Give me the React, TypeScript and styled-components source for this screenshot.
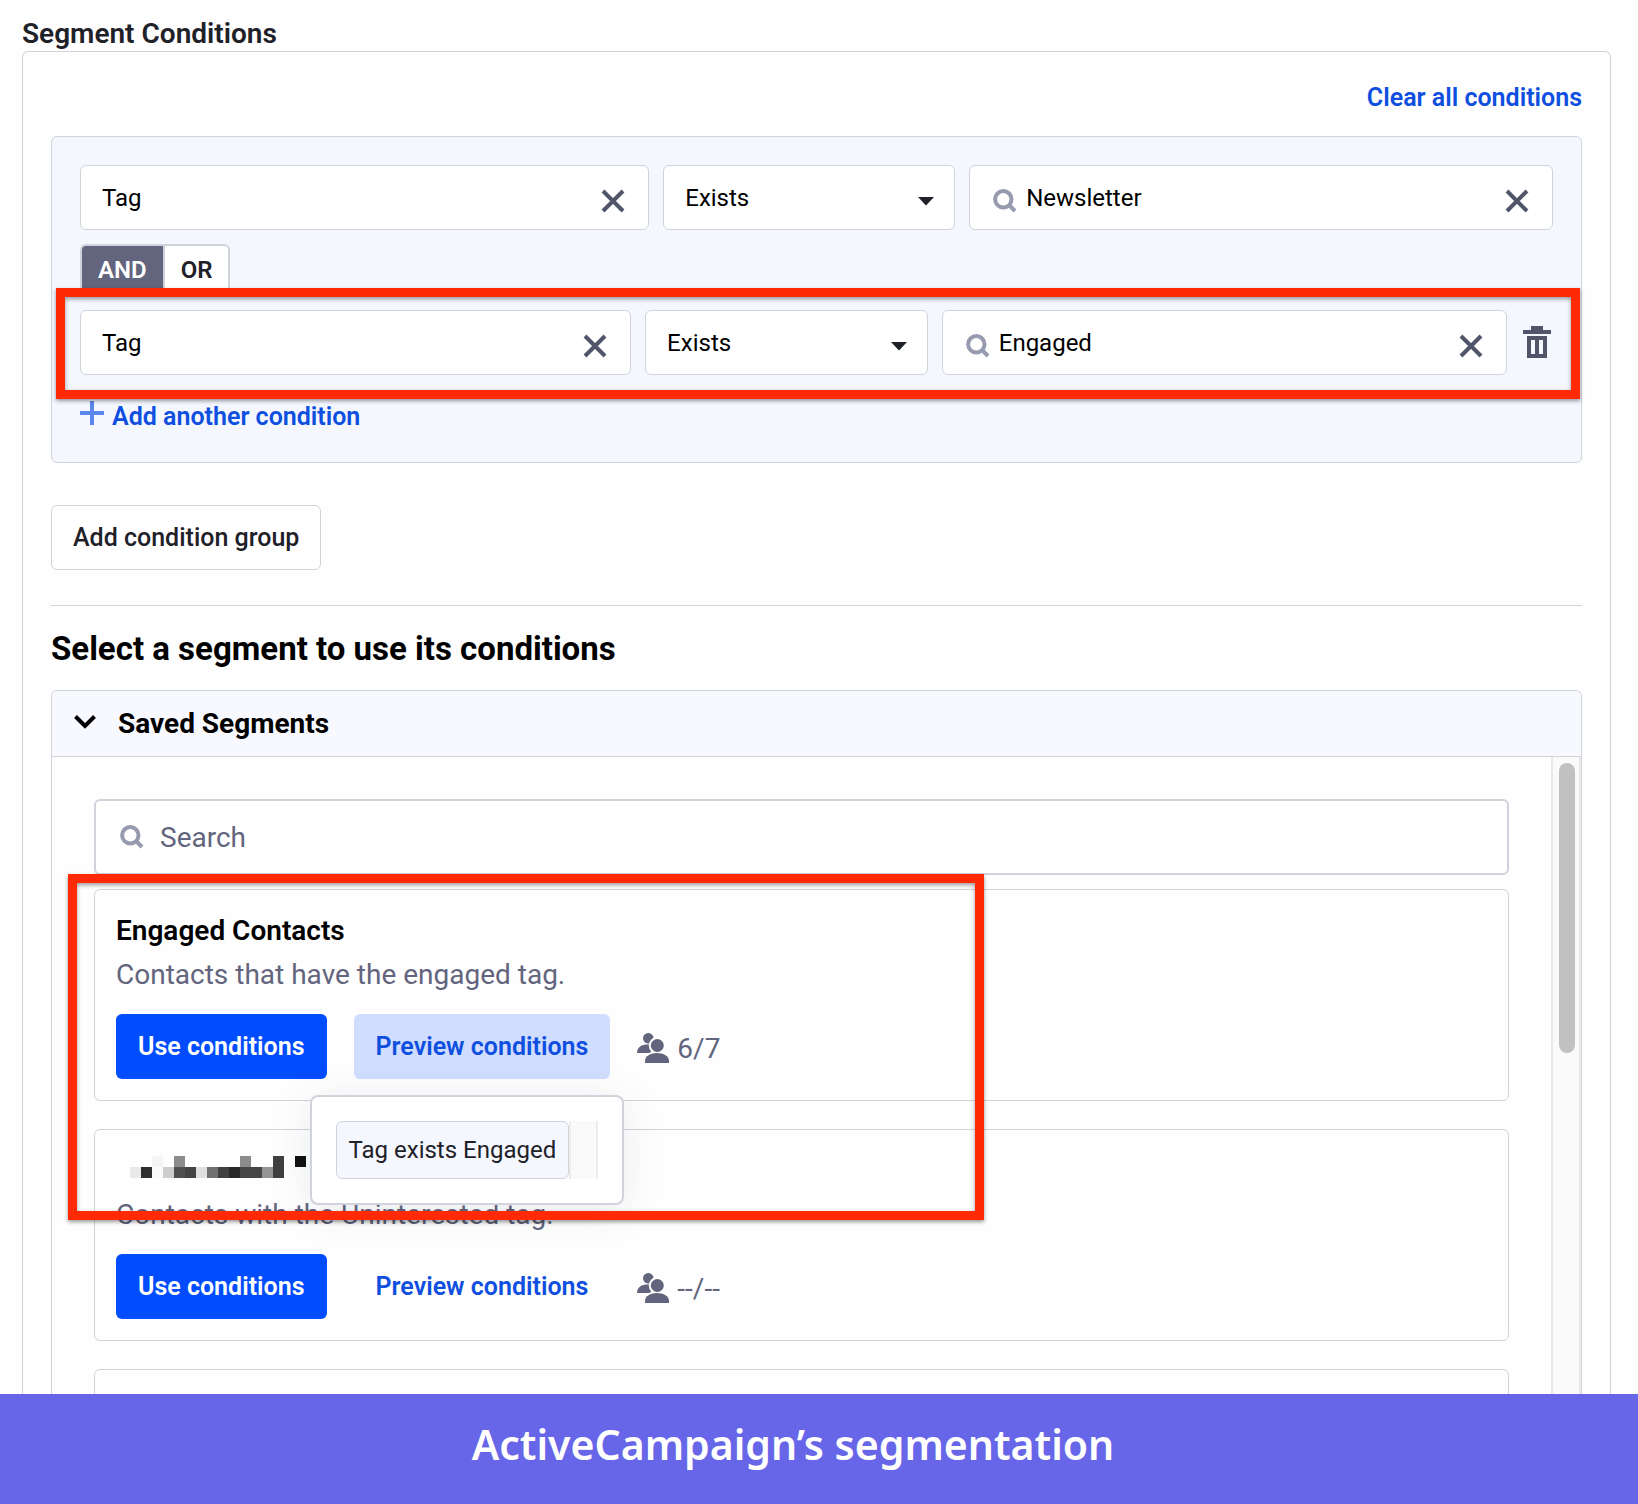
import React, { useState } from 'react';
import styled, { createGlobalStyle, css } from 'styled-components';

const color = {
  ink: '#1f2129',
  muted: '#62657d',
  icon: '#50556a',
  iconSoft: '#979bb0',
  line: '#d0d3dc',
  blue: '#004cff',
  link: '#0f4fe0',
  groupBg: '#f4f7fe',
  headBg: '#f8f9ff',
  red: '#ff2a04',
  banner: '#6765e8',
};

const GlobalStyle = createGlobalStyle`
  *, *::before, *::after { box-sizing: border-box; }
  body { margin: 0; background: #fefefe; }
  body, button, input, select { font-family: Roboto, "Liberation Sans", sans-serif; }
  h1, h2, h3, p { margin: 0; }
`;

/* ---------- page frame ---------- */

const Page = styled.div`
  display: flex;
  flex-direction: column;
  height: 100vh;
  color: ${color.ink};
`;

const Content = styled.main`
  display: flex;
  flex-direction: column;
  flex: 1;
  min-height: 0;
  overflow: hidden;
  padding: 16px 27px 0 22px;
`;

const PageTitle = styled.h1`
  font-size: 28px;
  font-weight: 600;
  line-height: 35px;
`;

const Panel = styled.section`
  display: flex;
  flex-direction: column;
  flex: 1;
  min-height: 0;
  padding: 28px 28px 0;
  border: 1px solid ${color.line};
  border-bottom: 0;
  border-radius: 6px 6px 0 0;
`;

const Banner = styled.footer`
  display: flex;
  align-items: center;
  justify-content: center;
  flex: none;
  height: 110px;
  padding: 0 52px 10px 0;
  background: ${color.banner};
  color: #fff;
  font-family: "Noto Sans", Roboto, sans-serif;
  font-size: 41px;
  font-weight: 600;
`;

/* ---------- buttons ---------- */

const buttonReset = css`
  display: inline-flex;
  align-items: center;
  margin: 0;
  padding: 0;
  border: 0;
  background: none;
  color: inherit;
  cursor: pointer;
`;

const LinkButton = styled.button`
  ${buttonReset}
  gap: 8px;
  color: ${color.link};
  font-size: 25px;
  font-weight: 600;
  line-height: 34px;
`;

const IconButton = styled.button`
  ${buttonReset}
  justify-content: center;
  flex: none;
`;

const Button = styled.button<{ $variant: 'outline' | 'primary' | 'soft' | 'text' }>`
  ${buttonReset}
  height: 65px;
  padding: 0 21px;
  border: 1px solid transparent;
  border-radius: 6px;
  font-size: 25px;
  font-weight: 600;
  white-space: nowrap;
  ${p => p.$variant === 'outline' && css`border-color: ${color.line}; background: #fff; font-weight: 500;`}
  ${p => p.$variant === 'primary' && css`background: ${color.blue}; color: #fff;`}
  ${p => p.$variant === 'soft' && css`background: #d0ddff; color: ${color.link};`}
  ${p => p.$variant === 'text' && css`color: ${color.link};`}
`;

/* ---------- condition builder ---------- */

const PanelHead = styled.div`
  display: flex;
  justify-content: flex-end;
  padding-top: 1px;
  margin-bottom: 21px;
`;

const ConditionGroup = styled.div`
  display: flex;
  flex-direction: column;
  align-items: stretch;
  flex: none;
  gap: 14px;
  padding: 28px;
  border: 1px solid ${color.line};
  border-radius: 6px;
  background: ${color.groupBg};
`;

const ConditionRow = styled.div`
  position: relative;
  display: flex;
  align-items: center;
  gap: 14px;
`;

const Fields = styled.div`
  display: grid;
  grid-template-columns: 195fr 100fr 200fr;
  flex: 1;
  gap: 14px;
`;

const FieldBox = styled.div`
  position: relative;
  display: flex;
  align-items: center;
  min-width: 0;
  height: 65px;
  padding: 0 23px 0 21px;
  border: 1px solid ${color.line};
  border-radius: 6px;
  background: #fff;
`;

const FieldInput = styled.input`
  flex: 1;
  min-width: 0;
  height: 100%;
  padding: 0;
  border: 0;
  outline: 0;
  background: none;
  color: #000;
  font-size: 24px;
`;

const FieldSelect = styled.select`
  flex: 1;
  height: 63px;
  margin: 0 -23px 0 -21px;
  padding: 0 48px 0 21px;
  border: 0;
  outline: 0;
  appearance: none;
  background: none;
  color: #000;
  font-size: 24px;
`;

const CaretSlot = styled.span`
  position: absolute;
  right: 20px;
  top: 0;
  display: flex;
  align-items: center;
  height: 100%;
  pointer-events: none;
`;

const FieldIcon = styled.span`
  display: flex;
  flex: none;
  margin: 0 9px 0 2px;
`;

const TrashSlot = styled(IconButton)`
  width: 32px;
  height: 65px;
`;

const Toggle = styled.div`
  display: flex;
  align-self: flex-start;
  height: 52px;
  border: 2px solid ${color.line};
  border-radius: 6px;
  overflow: hidden;
`;

const ToggleOption = styled.button<{ $on: boolean }>`
  ${buttonReset}
  padding: 0 16px;
  background: ${p => (p.$on ? color.muted : '#fff')};
  color: ${p => (p.$on ? '#fff' : color.ink)};
  font-size: 24px;
  font-weight: 600;

  & + & { border-left: 2px solid ${color.line}; }
`;

const AddRow = styled.div`
  display: flex;
  padding-top: 11px;
`;

const GroupActions = styled.div`
  display: flex;
  padding: 42px 0 35px;
`;

/* ---------- saved segments ---------- */

const SectionTitle = styled.h2`
  padding: 22px 0 20px;
  border-top: 1px solid ${color.line};
  color: #000;
  font-size: 33px;
  font-weight: 700;
  line-height: 42px;
`;

const Accordion = styled.div`
  display: flex;
  flex-direction: column;
  flex: 1;
  min-height: 0;
  border: 1px solid ${color.line};
  border-bottom: 0;
  border-radius: 6px 6px 0 0;
`;

const AccordionHead = styled.button`
  ${buttonReset}
  flex: none;
  gap: 22px;
  height: 66px;
  padding: 0 22px;
  border-bottom: 1px solid ${color.line};
  border-radius: 5px 5px 0 0;
  background: ${color.headBg};
  color: #000;
  font-size: 28px;
  font-weight: 700;
`;

const AccordionBody = styled.div`
  display: flex;
  flex: 1;
  min-height: 0;
`;

const SegmentList = styled.div`
  flex: 1;
  min-width: 0;
  overflow: hidden;
  padding: 42px 42px 0;
`;

const Scrollbar = styled.div`
  flex: none;
  width: 30px;
  padding: 6px;
  border: solid #e8e8e9;
  border-width: 0 2px;
  background: #fafafa;
`;

const Thumb = styled.div`
  width: 16px;
  height: 290px;
  border-radius: 8px;
  background: #c1c1c1;
`;

const SearchBox = styled.label`
  display: flex;
  align-items: center;
  gap: 16px;
  height: 76px;
  margin-bottom: 14px;
  padding: 0 24px;
  border: 2px solid ${color.line};
  border-radius: 6px;
  background: #fff;
`;

const SearchInput = styled(FieldInput)`
  font-size: 28px;

  &::placeholder { color: ${color.muted}; opacity: 1; }
`;

const SegmentCard = styled.article`
  position: relative;
  height: 212px;
  margin-bottom: 28px;
  padding: 21px;
  border: 1px solid ${color.line};
  border-radius: 6px;
`;

const SegmentName = styled.h3`
  height: 40px;
  margin-bottom: 4px;
  color: #000;
  font-size: 28px;
  font-weight: 600;
  line-height: 40px;
`;

const SegmentText = styled.p`
  margin-bottom: 19px;
  color: ${color.muted};
  font-size: 28px;
  line-height: 40px;
`;

const SegmentActions = styled.div`
  display: flex;
  align-items: center;
  gap: 27px;
`;

const PopoverAnchor = styled.div`
  position: relative;
  display: flex;
`;

const Popover = styled.div`
  position: absolute;
  z-index: 2;
  top: calc(100% + 16px);
  left: -44px;
  display: flex;
  padding: 24px;
  border: 2px solid ${color.line};
  border-radius: 8px;
  background: #fff;
  box-shadow: 0 6px 40px rgba(60, 66, 100, 0.1);
`;

const Chip = styled.span`
  height: 58px;
  padding: 0 12px;
  border: 1px solid ${color.line};
  border-radius: 6px;
  background: ${color.groupBg};
  font-size: 24px;
  line-height: 57px;
  white-space: nowrap;
`;

const ChipGutter = styled.span`
  width: 29px;
  border: solid #ededee;
  border-width: 0 2px;
  background: #fafafa;
`;

const Count = styled.span`
  display: flex;
  align-items: center;
  gap: 8px;
  padding-top: 3px;
  color: ${color.muted};
  font-size: 28px;
`;

/* ---------- annotations drawn over the page ---------- */

const callout = css`
  position: absolute;
  z-index: 3;
  border: 9px solid ${color.red};
  box-shadow: 0 2px 4px rgba(0, 0, 0, 0.4), inset 0 2px 4px rgba(0, 0, 0, 0.4);
  pointer-events: none;
`;

const RowCallout = styled.div`
  ${callout}
  inset: -22px -27px -24px -24px;
`;

const CardCallout = styled.div`
  ${callout}
  top: -16px;
  left: -27px;
  width: 916px;
  height: 346px;
`;

/* ---------- icons ---------- */

const CloseIcon = () => (
  <svg width="24" height="32" viewBox="0 0 24 32" fill="none" stroke={color.icon} strokeWidth="4" aria-hidden="true">
    <path d="M2 9 22 29M22 9 2 29" />
  </svg>
);

const SearchIcon = ({ drop = 0 }: { drop?: number }) => (
  <svg width="24" height="32" viewBox={`0 ${-4 - drop} 24 32`} fill="none" stroke={color.iconSoft} strokeWidth="4" aria-hidden="true">
    <circle cx="10.3" cy="10.3" r="8.2" />
    <path d="M15.5 15.5 22 22" />
  </svg>
);

const CaretIcon = () => (
  <svg width="16" height="24" viewBox="0 0 16 24" fill={color.ink} aria-hidden="true">
    <path d="M0 11h16l-8 8.5z" />
  </svg>
);

const TrashIcon = () => (
  <svg width="28" height="34" viewBox="0 0 28 34" fill={color.icon} fillRule="evenodd" aria-hidden="true">
    <path d="M8 0h12v4h8v4H0V4h8zM4 10h20v22H4zM8 14v14h4V14zM16 14v14h4V14z" />
  </svg>
);

const PlusIcon = () => (
  <svg width="24" height="34" viewBox="0 0 24 34" fill="#5c86ec" aria-hidden="true">
    <path d="M10 1h4v10h10v4H14v10h-4V15H0v-4h10z" />
  </svg>
);

const ChevronIcon = () => (
  <svg width="22" height="22" viewBox="0 0 22 22" fill="none" stroke="#000" strokeWidth="4" aria-hidden="true">
    <path d="M1.500 3.500 11 13 20.500 3.500" />
  </svg>
);

const PeopleIcon = () => (
  <svg width="32" height="30" viewBox="0 0 32 30" fill={color.muted} aria-hidden="true">
    <circle cx="11.3" cy="5.3" r="5.3" />
    <path d="M0 20c0-5 4-8.500 9-8.500h5V20z" />
    <circle cx="20.300" cy="12.500" r="8.500" fill="#fefefe" />
    <path d="M6.500 30c0-8 6-12 13.500-12h4v12z" fill="#fefefe" />
    <circle cx="20.300" cy="12.500" r="6.500" />
    <path d="M8 30v-2c0-5 5.500-8 12-8s12 3 12 8v2z" />
  </svg>
);

const pixelRows: [number, number, string][] = [
  [2, 0, '#f5f5f5'], [4, 0, '#8c8c8c'], [10, 0, '#8c8c8c'], [13, 0, '#404040'], [15, 0, '#111111'],
  [0, 1, '#e9e9e9'], [1, 1, '#2e2e2e'], [2, 1, '#fafafa'], [3, 1, '#cdcdcd'], [4, 1, '#505050'], [5, 1, '#444444'],
  [6, 1, '#e0e0e0'], [7, 1, '#707070'], [8, 1, '#404040'], [9, 1, '#282828'], [10, 1, '#464646'], [11, 1, '#464646'],
  [12, 1, '#959595'], [13, 1, '#404040'],
];

const PixelatedName = () => (
  <svg width="200" height="40" viewBox="0 0 200 40" shapeRendering="crispEdges" role="img" aria-label="Hidden segment name">
    {pixelRows.map(([col, row, fill]) => (
      <rect key={`${col}-${row}`} x={14 + col * 11} y={5 + row * 11} width="11" height="11" fill={fill} />
    ))}
  </svg>
);

/* ---------- composed parts ---------- */

function Condition({ value, removable }: { value: string; removable?: boolean }) {
  const [field, setField] = useState('Tag');
  const [tag, setTag] = useState(value);
  return (
    <ConditionRow>
      <Fields>
        <FieldBox>
          <FieldInput aria-label="Field" value={field} onChange={e => setField(e.target.value)} />
          <IconButton aria-label="Clear field" onClick={() => setField('')}><CloseIcon /></IconButton>
        </FieldBox>
        <FieldBox>
          <FieldSelect aria-label="Operator" defaultValue="Exists">
            <option>Exists</option>
          </FieldSelect>
          <CaretSlot><CaretIcon /></CaretSlot>
        </FieldBox>
        <FieldBox>
          <FieldIcon><SearchIcon drop={3} /></FieldIcon>
          <FieldInput aria-label="Tag name" value={tag} onChange={e => setTag(e.target.value)} />
          <IconButton aria-label="Clear tag name" onClick={() => setTag('')}><CloseIcon /></IconButton>
        </FieldBox>
      </Fields>
      {removable && <TrashSlot aria-label="Delete condition"><TrashIcon /></TrashSlot>}
      {removable && <RowCallout />}
    </ConditionRow>
  );
}

interface SegmentProps {
  name: React.ReactNode;
  text: string;
  count: string;
  preview?: string;
}

function Segment({ name, text, count, preview }: SegmentProps) {
  return (
    <SegmentCard>
      <SegmentName>{name}</SegmentName>
      <SegmentText>{text}</SegmentText>
      <SegmentActions>
        <Button $variant="primary">Use conditions</Button>
        <PopoverAnchor>
          <Button $variant={preview ? 'soft' : 'text'}>Preview conditions</Button>
          {preview && (
            <Popover>
              <Chip>{preview}</Chip>
              <ChipGutter />
            </Popover>
          )}
        </PopoverAnchor>
        <Count><PeopleIcon />{count}</Count>
      </SegmentActions>
      {preview && <CardCallout />}
    </SegmentCard>
  );
}

export default function App() {
  const [joiner, setJoiner] = useState('AND');
  return (
    <Page>
      <GlobalStyle />
      <Content>
        <PageTitle>Segment Conditions</PageTitle>
        <Panel>
          <PanelHead><LinkButton>Clear all conditions</LinkButton></PanelHead>
          <ConditionGroup>
            <Condition value="Newsletter" />
            <Toggle>
              {['AND', 'OR'].map(option => (
                <ToggleOption key={option} $on={joiner === option} onClick={() => setJoiner(option)}>{option}</ToggleOption>
              ))}
            </Toggle>
            <Condition value="Engaged" removable />
            <AddRow><LinkButton><PlusIcon />Add another condition</LinkButton></AddRow>
          </ConditionGroup>
          <GroupActions><Button $variant="outline">Add condition group</Button></GroupActions>
          <SectionTitle>Select a segment to use its conditions</SectionTitle>
          <Accordion>
            <AccordionHead aria-expanded="true"><ChevronIcon />Saved Segments</AccordionHead>
            <AccordionBody>
              <SegmentList>
                <SearchBox>
                  <SearchIcon />
                  <SearchInput type="text" placeholder="Search" aria-label="Search" />
                </SearchBox>
                <Segment
                  name="Engaged Contacts"
                  text="Contacts that have the engaged tag."
                  count="6/7"
                  preview="Tag exists Engaged"
                />
                <Segment name={<PixelatedName />} text="Contacts with the Uninterested tag." count="--/--" />
                <SegmentCard />
              </SegmentList>
              <Scrollbar><Thumb /></Scrollbar>
            </AccordionBody>
          </Accordion>
        </Panel>
      </Content>
      <Banner>ActiveCampaign’s segmentation</Banner>
    </Page>
  );
}
